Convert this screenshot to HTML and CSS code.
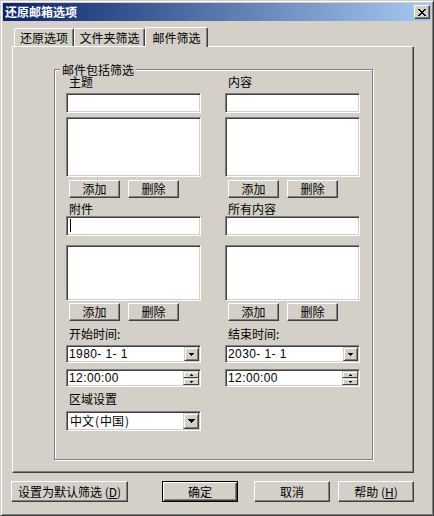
FILE: index.html
```html
<!DOCTYPE html>
<html lang="zh-CN">
<head>
<meta charset="utf-8">
<title>还原邮箱选项</title>
<link rel="stylesheet" href="styles.css">
</head>
<body>
<div class="window">
  <div class="titlebar">
    <span class="title">还原邮箱选项</span>
    <span class="close"><svg width="8" height="7" viewBox="0 0 8 7" shape-rendering="crispEdges"><path d="M0 0h2v1H0zM6 0h2v1H6zM1 1h2v1H1zM5 1h2v1H5zM2 2h4v1H2zM3 3h2v1H3zM2 4h4v1H2zM1 5h2v1H1zM5 5h2v1H5zM0 6h2v1H0zM6 6h2v1H6z" fill="#000"/></svg></span>
  </div>
  <div class="tabs">
    <div class="tab t1">还原选项</div>
    <div class="tab t2">文件夹筛选</div>
    <div class="tab t3 sel">邮件筛选</div>
  </div>
  <div class="page">
    <div class="group">
      <span class="legend">邮件包括筛选</span>
      <div class="cols">
        <div class="col">
          <div class="lbl l-top">主题</div>
          <div class="sunken edit e-top"></div>
          <div class="sunken list list1"></div>
          <div class="btns b1"><button class="btn">添加</button><button class="btn">删除</button></div>
          <div class="lbl l-mid">附件</div>
          <div class="sunken edit"><span class="caret"></span></div>
          <div class="sunken list list2"></div>
          <div class="btns b2"><button class="btn">添加</button><button class="btn">删除</button></div>
          <div class="lbl l-time">开始时间:</div>
          <div class="sunken combo date">
            <span class="val">1980- 1- 1</span>
            <span class="ddbtn"><svg width="5" height="3" viewBox="0 0 5 3" shape-rendering="crispEdges"><path d="M0 0h5v1H0zM1 1h3v1H1zM2 2h1v1H2z" fill="#000"/></svg></span>
          </div>
          <div class="sunken combo time">
            <span class="val">12:00:00</span>
            <span class="spin">
              <span class="spinbtn"><svg width="3" height="2" viewBox="0 0 3 2" shape-rendering="crispEdges"><path d="M1 0h1v1H1zM0 1h3v1H0z" fill="#000"/></svg></span>
              <span class="spinbtn"><svg width="3" height="2" viewBox="0 0 3 2" shape-rendering="crispEdges"><path d="M0 0h3v1H0zM1 1h1v1H1z" fill="#000"/></svg></span>
            </span>
          </div>
          <div class="lbl l-region">区域设置</div>
          <div class="sunken combo region">
            <span class="val cjk">中文<span class="paren">(</span>中国<span class="paren">)</span></span>
            <span class="ddbtn big"><svg width="7" height="4" viewBox="0 0 7 4" shape-rendering="crispEdges"><path d="M0 0h7v1H0zM1 1h5v1H1zM2 2h3v1H2zM3 3h1v1H3z" fill="#000"/></svg></span>
          </div>
        </div>
        <div class="col">
          <div class="lbl l-top">内容</div>
          <div class="sunken edit e-top"></div>
          <div class="sunken list list1"></div>
          <div class="btns b1"><button class="btn">添加</button><button class="btn">删除</button></div>
          <div class="lbl l-mid">所有内容</div>
          <div class="sunken edit"></div>
          <div class="sunken list list2"></div>
          <div class="btns b2"><button class="btn">添加</button><button class="btn">删除</button></div>
          <div class="lbl l-time">结束时间:</div>
          <div class="sunken combo date">
            <span class="val">2030- 1- 1</span>
            <span class="ddbtn"><svg width="5" height="3" viewBox="0 0 5 3" shape-rendering="crispEdges"><path d="M0 0h5v1H0zM1 1h3v1H1zM2 2h1v1H2z" fill="#000"/></svg></span>
          </div>
          <div class="sunken combo time">
            <span class="val">12:00:00</span>
            <span class="spin">
              <span class="spinbtn"><svg width="3" height="2" viewBox="0 0 3 2" shape-rendering="crispEdges"><path d="M1 0h1v1H1zM0 1h3v1H0z" fill="#000"/></svg></span>
              <span class="spinbtn"><svg width="3" height="2" viewBox="0 0 3 2" shape-rendering="crispEdges"><path d="M0 0h3v1H0zM1 1h1v1H1z" fill="#000"/></svg></span>
            </span>
          </div>
        </div>
      </div>
    </div>
  </div>
  <div class="footer">
    <button class="btn fbtn wide">设置为默认筛选 (<u>D</u>)</button>
    <button class="btn fbtn default">确定</button>
    <button class="btn fbtn cancel">取消</button>
    <button class="btn fbtn help">帮助 (<u>H</u>)</button>
  </div>
</div>
</body>
</html>
```
FILE: styles.css
```css
* { box-sizing: border-box; }
html, body { margin: 0; padding: 0; background: #d4d0c8; }
body {
  font-family: "Noto Sans CJK SC", "Liberation Sans", sans-serif;
  font-size: 12px;
  color: #000;
}
.window {
  width: 434px;
  height: 516px;
  background: #d4d0c8;
  border: 1px solid;
  border-color: #d4d0c8 #404040 #404040 #d4d0c8;
  box-shadow: inset 1px 1px 0 #fff, inset -1px -1px 0 #808080;
  padding: 2px;
}
.titlebar {
  height: 18px;
  display: flex;
  align-items: center;
  padding-left: 2px;
  background: linear-gradient(to right, #0a246a, #a6caf0);
}
.title {
  color: #fff;
  font-weight: bold;
  font-size: 12px;
  line-height: 18px;
}
.close {
  margin-left: auto;
  margin-right: 1px;
  width: 16px;
  height: 14px;
  background: #d4d0c8;
  border: 1px solid;
  border-color: #fff #404040 #404040 #fff;
  box-shadow: inset -1px -1px 0 #808080;
  display: flex;
  align-items: center;
  justify-content: center;
  padding-right: 1px;
}
.close svg { display: block; }

/* tabs */
.tabs {
  margin-top: 6px;
  margin-left: 9px;
  height: 19px;
  display: flex;
  align-items: flex-end;
  padding-left: 2px;
}
.tab {
  height: 18px;
  line-height: 16px;
  text-align: center;
  background: #d4d0c8;
  border-top: 1px solid #fff;
  border-left: 1px solid #fff;
  border-right: 1px solid #404040;
  box-shadow: inset -1px 0 0 #808080;
  border-radius: 2px 2px 0 0;
  padding-top: 1px;
}
.t1 { width: 60px; }
.t2 { width: 71px; }
.t3 { width: 63px; }
.tab.sel {
  height: 20px;
  margin-bottom: -1px;
  position: relative;
  z-index: 1;
  padding-top: 2px;
}

/* page */
.page {
  margin-left: 9px;
  width: 402px;
  height: 427px;
  border: 1px solid;
  border-color: #fff #404040 #404040 #fff;
  box-shadow: inset -1px -1px 0 #808080;
  padding: 22px 0 0 41px;
}
.group {
  position: relative;
  width: 319px;
  height: 391px;
  border: 1px solid #808080;
  box-shadow: 1px 1px 0 #fff, inset 1px 1px 0 #fff;
  padding: 5px 0 0 11px;
}
.legend {
  position: absolute;
  left: 5px;
  top: -6px;
  padding: 0 2px;
  line-height: 12px;
  height: 12px;
  background: #d4d0c8;
}
.cols {
  display: flex;
  gap: 24px;
}
.col {
  width: 135px;
  display: flex;
  flex-direction: column;
}
.lbl {
  height: 14px;
  line-height: 14px;
  padding-left: 3px;
  white-space: nowrap;
}
.l-top {
  line-height: 12px;
  padding-top: 1px;
}
.l-mid { margin-top: 4px; }
.l-time { margin-top: 6px; }
.l-region { margin-top: 5px; }
.sunken {
  background: #fff;
  border: 1px solid;
  border-color: #808080 #fff #fff #808080;
  box-shadow: inset 1px 1px 0 #404040, inset -1px -1px 0 #d4d0c8;
}
.edit { height: 20px; position: relative; }
.e-top { margin-top: 4px; }
.list { margin-top: 4px; }
.list1 { height: 60px; }
.list2 { height: 56px; margin-top: 9px; }
.caret {
  position: absolute;
  left: 3px;
  top: 2px;
  width: 1px;
  height: 13px;
  background: #000;
}
.btns {
  display: flex;
  gap: 8px;
  padding-left: 3px;
}
.b1 { margin-top: 3px; }
.b2 { margin-top: 2px; }
.btn {
  font-family: "Noto Sans CJK SC", "Liberation Sans", sans-serif;
  font-size: 12px;
  color: #000;
  margin: 0;
  padding: 0;
  width: 51px;
  height: 18px;
  line-height: 14px;
  background: #d4d0c8;
  border: 1px solid;
  border-color: #fff #404040 #404040 #fff;
  box-shadow: inset -1px -1px 0 #808080;
  text-align: center;
}

/* combos */
.combo {
  display: flex;
  align-items: center;
  padding: 1px;
  margin-top: 4px;
}
.combo.date { height: 18px; }
.combo.time { height: 18px; margin-top: 6px; }
.combo.region { height: 20px; margin-top: 5px; }
.val {
  flex: 1;
  padding-left: 1px;
  font-family: "Liberation Sans", sans-serif;
  font-size: 12px;
  letter-spacing: 0.4px;
  white-space: pre;
  line-height: 14px;
}
.val.cjk {
  font-family: "Noto Sans CJK SC", sans-serif;
  letter-spacing: 0;
  padding-left: 2px;
}
.paren {
  display: inline-block;
  width: 6px;
  text-align: center;
}
.ddbtn {
  width: 15px;
  height: 14px;
  background: #d4d0c8;
  border: 1px solid;
  border-color: #d4d0c8 #404040 #404040 #d4d0c8;
  box-shadow: inset 1px 1px 0 #fff, inset -1px -1px 0 #808080;
  display: flex;
  align-items: center;
  justify-content: center;
}
.ddbtn.big { width: 16px; height: 16px; }
.ddbtn svg, .spinbtn svg { display: block; }
.spin {
  display: flex;
  flex-direction: column;
  width: 16px;
  height: 14px;
}
.spinbtn {
  height: 7px;
  background: #d4d0c8;
  border: 1px solid;
  border-color: #d4d0c8 #404040 #404040 #d4d0c8;
  box-shadow: inset 1px 1px 0 #fff;
  display: flex;
  align-items: center;
  justify-content: center;
}

/* footer */
.footer {
  display: flex;
  margin-top: 8px;
  padding-left: 8px;
}
.fbtn {
  height: 21px;
  width: 76px;
  line-height: 17px;
}
.fbtn.wide { width: 117px; }
.fbtn.default {
  margin-left: 34px;
  border: 1px solid #000;
  box-shadow: inset 1px 1px 0 #fff, inset -1px -1px 0 #404040, inset -2px -2px 0 #808080;
}
.fbtn.cancel { margin-left: 16px; }
.fbtn.help { margin-left: 8px; }
.fbtn u { text-decoration: underline; }
```
